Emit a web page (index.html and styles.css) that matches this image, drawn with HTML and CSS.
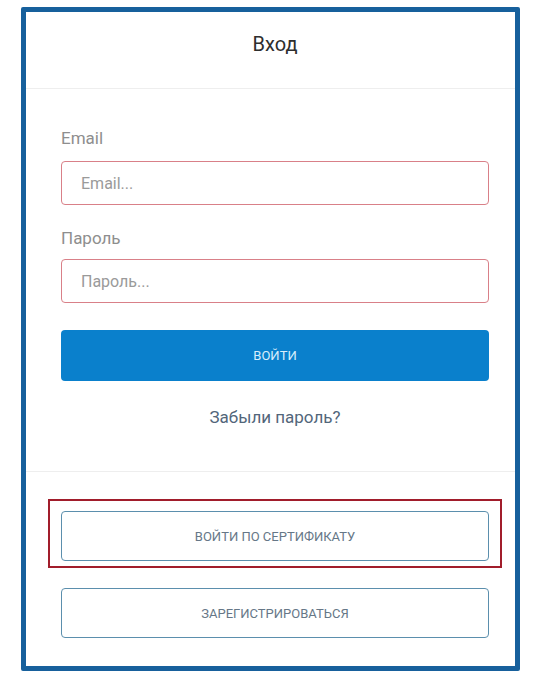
FILE: index.html
```html
<!DOCTYPE html>
<html>
    <head>
        <meta charset="UTF-8">
        <meta name="viewport" content="width=device-width, initial-scale=1.0"/>
        <title>Вход</title>
        <link rel="stylesheet" href="styles.css">
    </head>
    <body>
        <div class="login-frame">
            <div class="login-header">
                <h1>Вход</h1>
            </div>

            <form class="login-form">
                <label for="email" class="field-label first">Email</label>
                <input id="email" class="field-input" type="text" placeholder="Email...">

                <label for="password" class="field-label">Пароль</label>
                <input id="password" class="field-input" type="password" placeholder="Пароль...">

                <button type="submit" class="button-primary">войти</button>

                <a href="#" class="forgot-link">Забыли пароль?</a>
            </form>

            <div class="login-footer">
                <div class="highlight">
                    <button class="button-outline">войти по сертификату</button>
                </div>
                <button class="button-outline register">зарегистрироваться</button>
            </div>
        </div>
    </body>
</html>
```

FILE: styles.css
```css
*
{
    box-sizing: border-box;
}

body
{
    margin: 0;
    background: #fff;
    font-family: Roboto, "Liberation Sans", sans-serif;
}

.login-frame
{
    width: 499px;
    height: 664px;
    margin: 7px 0 0 21px;
    border: 5px solid #17609c;
    border-radius: 2px;
    background: #fff;
}

.login-header
{
    height: 77px;
    padding: 0 26px 0 35px;
    border-bottom: 1px solid #eeeeee;
    display: flex;
    align-items: center;
    justify-content: center;
}

.login-header h1
{
    margin: 0 0 12px 0;
    font-size: 20px;
    font-weight: 400;
    color: #2e2e2e;
}

.login-form
{
    padding: 39px 26px 44px 35px;
    border-bottom: 1px solid #eeeeee;
    display: flex;
    flex-direction: column;
}

.field-label
{
    display: block;
    font-size: 17px;
    line-height: 20px;
    color: #8e8e8e;
    margin: 23px 0 11px 0;
}

.field-label.first
{
    margin-top: 0;
    margin-bottom: 13px;
}

.field-input
{
    width: 100%;
    height: 44px;
    padding: 0 19px;
    border: 1px solid #d98088;
    border-radius: 4px;
    font-family: inherit;
    font-size: 16px;
    color: #555;
    background: #fff;
}

.field-input::placeholder
{
    color: #9a9a9a;
}

.button-primary
{
    margin-top: 27px;
    height: 51px;
    border: none;
    border-radius: 4px;
    background: #0a80cc;
    color: #d8eefc;
    font-family: inherit;
    font-size: 13px;
    text-transform: uppercase;
}

.forgot-link
{
    margin-top: 26px;
    text-align: center;
    font-size: 17px;
    line-height: 20px;
    color: #52667a;
    text-decoration: none;
}

.login-footer
{
    padding: 27px 13px 0 22px;
}

.highlight
{
    border: 2px solid #a11d2b;
    padding: 10px 11px 5px 11px;
}

.button-outline
{
    display: block;
    width: 100%;
    height: 50px;
    border: 1px solid #5b8fad;
    border-radius: 4px;
    background: #fff;
    color: #667787;
    font-family: inherit;
    font-size: 13px;
    text-transform: uppercase;
}

.button-outline.register
{
    width: 428px;
    margin: 20px 0 0 13px;
}
```
